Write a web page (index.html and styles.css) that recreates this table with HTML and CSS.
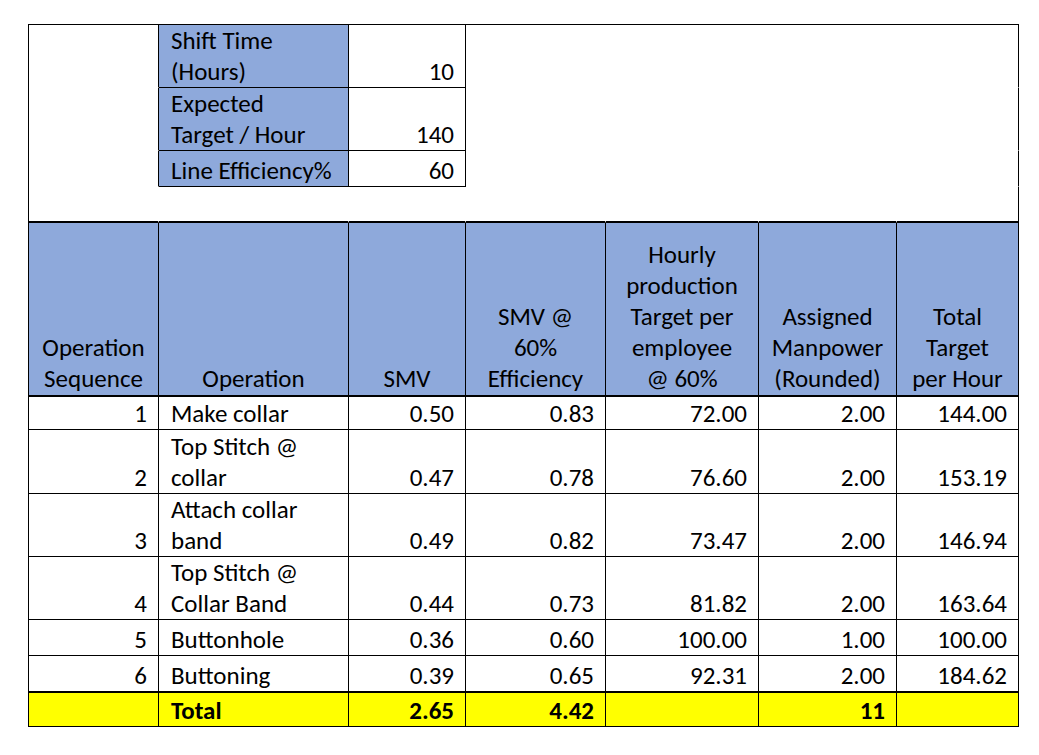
FILE: index.html
```html
<!DOCTYPE html>
<html lang="en">
<head>
<meta charset="utf-8">
<title>Line Balancing</title>
<link rel="stylesheet" href="styles.css">
</head>
<body>
<table class="sheet">
  <colgroup>
    <col class="c1"><col class="c2"><col class="c3"><col class="c4"><col class="c5"><col class="c6"><col class="c7">
  </colgroup>
  <tbody>
    <tr class="h63">
      <td class="pad edge-box"></td>
      <td class="lbl box">Shift Time<br>(Hours)</td>
      <td class="num box">10</td>
      <td class="blank"></td><td class="blank"></td><td class="blank"></td>
      <td class="blank outer"></td>
    </tr>
    <tr class="h63">
      <td class="pad edge-box"></td>
      <td class="lbl box">Expected<br>Target / Hour</td>
      <td class="num box">140</td>
      <td class="blank"></td><td class="blank"></td><td class="blank"></td>
      <td class="blank outer"></td>
    </tr>
    <tr class="h36">
      <td class="pad edge-box"></td>
      <td class="lbl box">Line Efficiency%</td>
      <td class="num box">60</td>
      <td class="blank"></td><td class="blank"></td><td class="blank"></td>
      <td class="blank outer"></td>
    </tr>
    <tr class="h36 gap">
      <td class="blank"></td><td class="blank"></td><td class="blank"></td><td class="blank"></td><td class="blank"></td><td class="blank"></td>
      <td class="blank outer"></td>
    </tr>
    <tr class="head">
      <th>Operation<br>Sequence</th>
      <th>Operation</th>
      <th>SMV</th>
      <th>SMV @<br>60%<br>Efficiency</th>
      <th>Hourly<br>production<br>Target per<br>employee<br>@ 60%</th>
      <th>Assigned<br>Manpower<br>(Rounded)</th>
      <th>Total<br>Target<br>per Hour</th>
    </tr>
    <tr class="h33">
      <td class="num">1</td><td class="txt">Make collar</td><td class="num">0.50</td><td class="num">0.83</td><td class="num">72.00</td><td class="num">2.00</td><td class="num">144.00</td>
    </tr>
    <tr class="h64">
      <td class="num">2</td><td class="txt">Top Stitch @<br>collar</td><td class="num">0.47</td><td class="num">0.78</td><td class="num">76.60</td><td class="num">2.00</td><td class="num">153.19</td>
    </tr>
    <tr class="h63">
      <td class="num">3</td><td class="txt">Attach collar<br>band</td><td class="num">0.49</td><td class="num">0.82</td><td class="num">73.47</td><td class="num">2.00</td><td class="num">146.94</td>
    </tr>
    <tr class="h63">
      <td class="num">4</td><td class="txt">Top Stitch @<br>Collar Band</td><td class="num">0.44</td><td class="num">0.73</td><td class="num">81.82</td><td class="num">2.00</td><td class="num">163.64</td>
    </tr>
    <tr class="h36">
      <td class="num">5</td><td class="txt">Buttonhole</td><td class="num">0.36</td><td class="num">0.60</td><td class="num">100.00</td><td class="num">1.00</td><td class="num">100.00</td>
    </tr>
    <tr class="h37 last">
      <td class="num">6</td><td class="txt">Buttoning</td><td class="num">0.39</td><td class="num">0.65</td><td class="num">92.31</td><td class="num">2.00</td><td class="num">184.62</td>
    </tr>
    <tr class="h34 total">
      <td class="num"></td><td class="txt">Total</td><td class="num">2.65</td><td class="num">4.42</td><td class="num"></td><td class="num">11</td><td class="num"></td>
    </tr>
  </tbody>
</table>
</body>
</html>
```

FILE: styles.css
```css
html, body {
  margin: 0;
  padding: 0;
  background: #ffffff;
}

body {
  padding: 24px 0 0 28px;
  font-family: Carlito, Lato, "Open Sans", sans-serif;
  font-size: 25px;
  color: #000000;
}

.sheet {
  border-collapse: separate;
  border-spacing: 0;
  table-layout: fixed;
  width: 991px;
  border-top: 1px solid #000;
  border-left: 1px solid #000;
}

.c1 { width: 130px; }
.c2 { width: 190px; }
.c3 { width: 117px; }
.c4 { width: 140px; }
.c5 { width: 153px; }
.c6 { width: 138px; }
.c7 { width: 122px; }

.sheet td,
.sheet th {
  box-sizing: border-box;
  padding: 0 11px 0 12px;
  line-height: 31px;
  vertical-align: bottom;
  border-right: 1px solid #000;
  border-bottom: 1px solid #000;
  font-weight: normal;
  white-space: nowrap;
  overflow: hidden;
}

/* top parameter block */
.sheet td.blank {
  border-right-color: transparent;
  border-bottom-color: transparent;
}
.sheet td.outer { border-right-color: #000; }
.sheet td.pad { border-bottom-color: transparent; }

.sheet td.lbl {
  background: #8ea9db;
  text-align: left;
}

.gap td { border-bottom: 2px solid #000; }
.gap td.blank { border-bottom-color: #000; }

/* header */
.head { height: 174px; }
.sheet th {
  background: #8ea9db;
  text-align: center;
  border-bottom: 2px solid #000;
  padding: 0 2px 1px;
}

.num { text-align: right; }
.txt { text-align: left; }

.h33 { height: 33px; }
.h34 { height: 34px; }
.h36 { height: 36px; }
.h37 { height: 37px; }
.h63 { height: 63px; }
.h64 { height: 64px; }

.last td { border-bottom: 2px solid #000; }

.total td {
  background: #ffff00;
  font-weight: bold;
}
```
